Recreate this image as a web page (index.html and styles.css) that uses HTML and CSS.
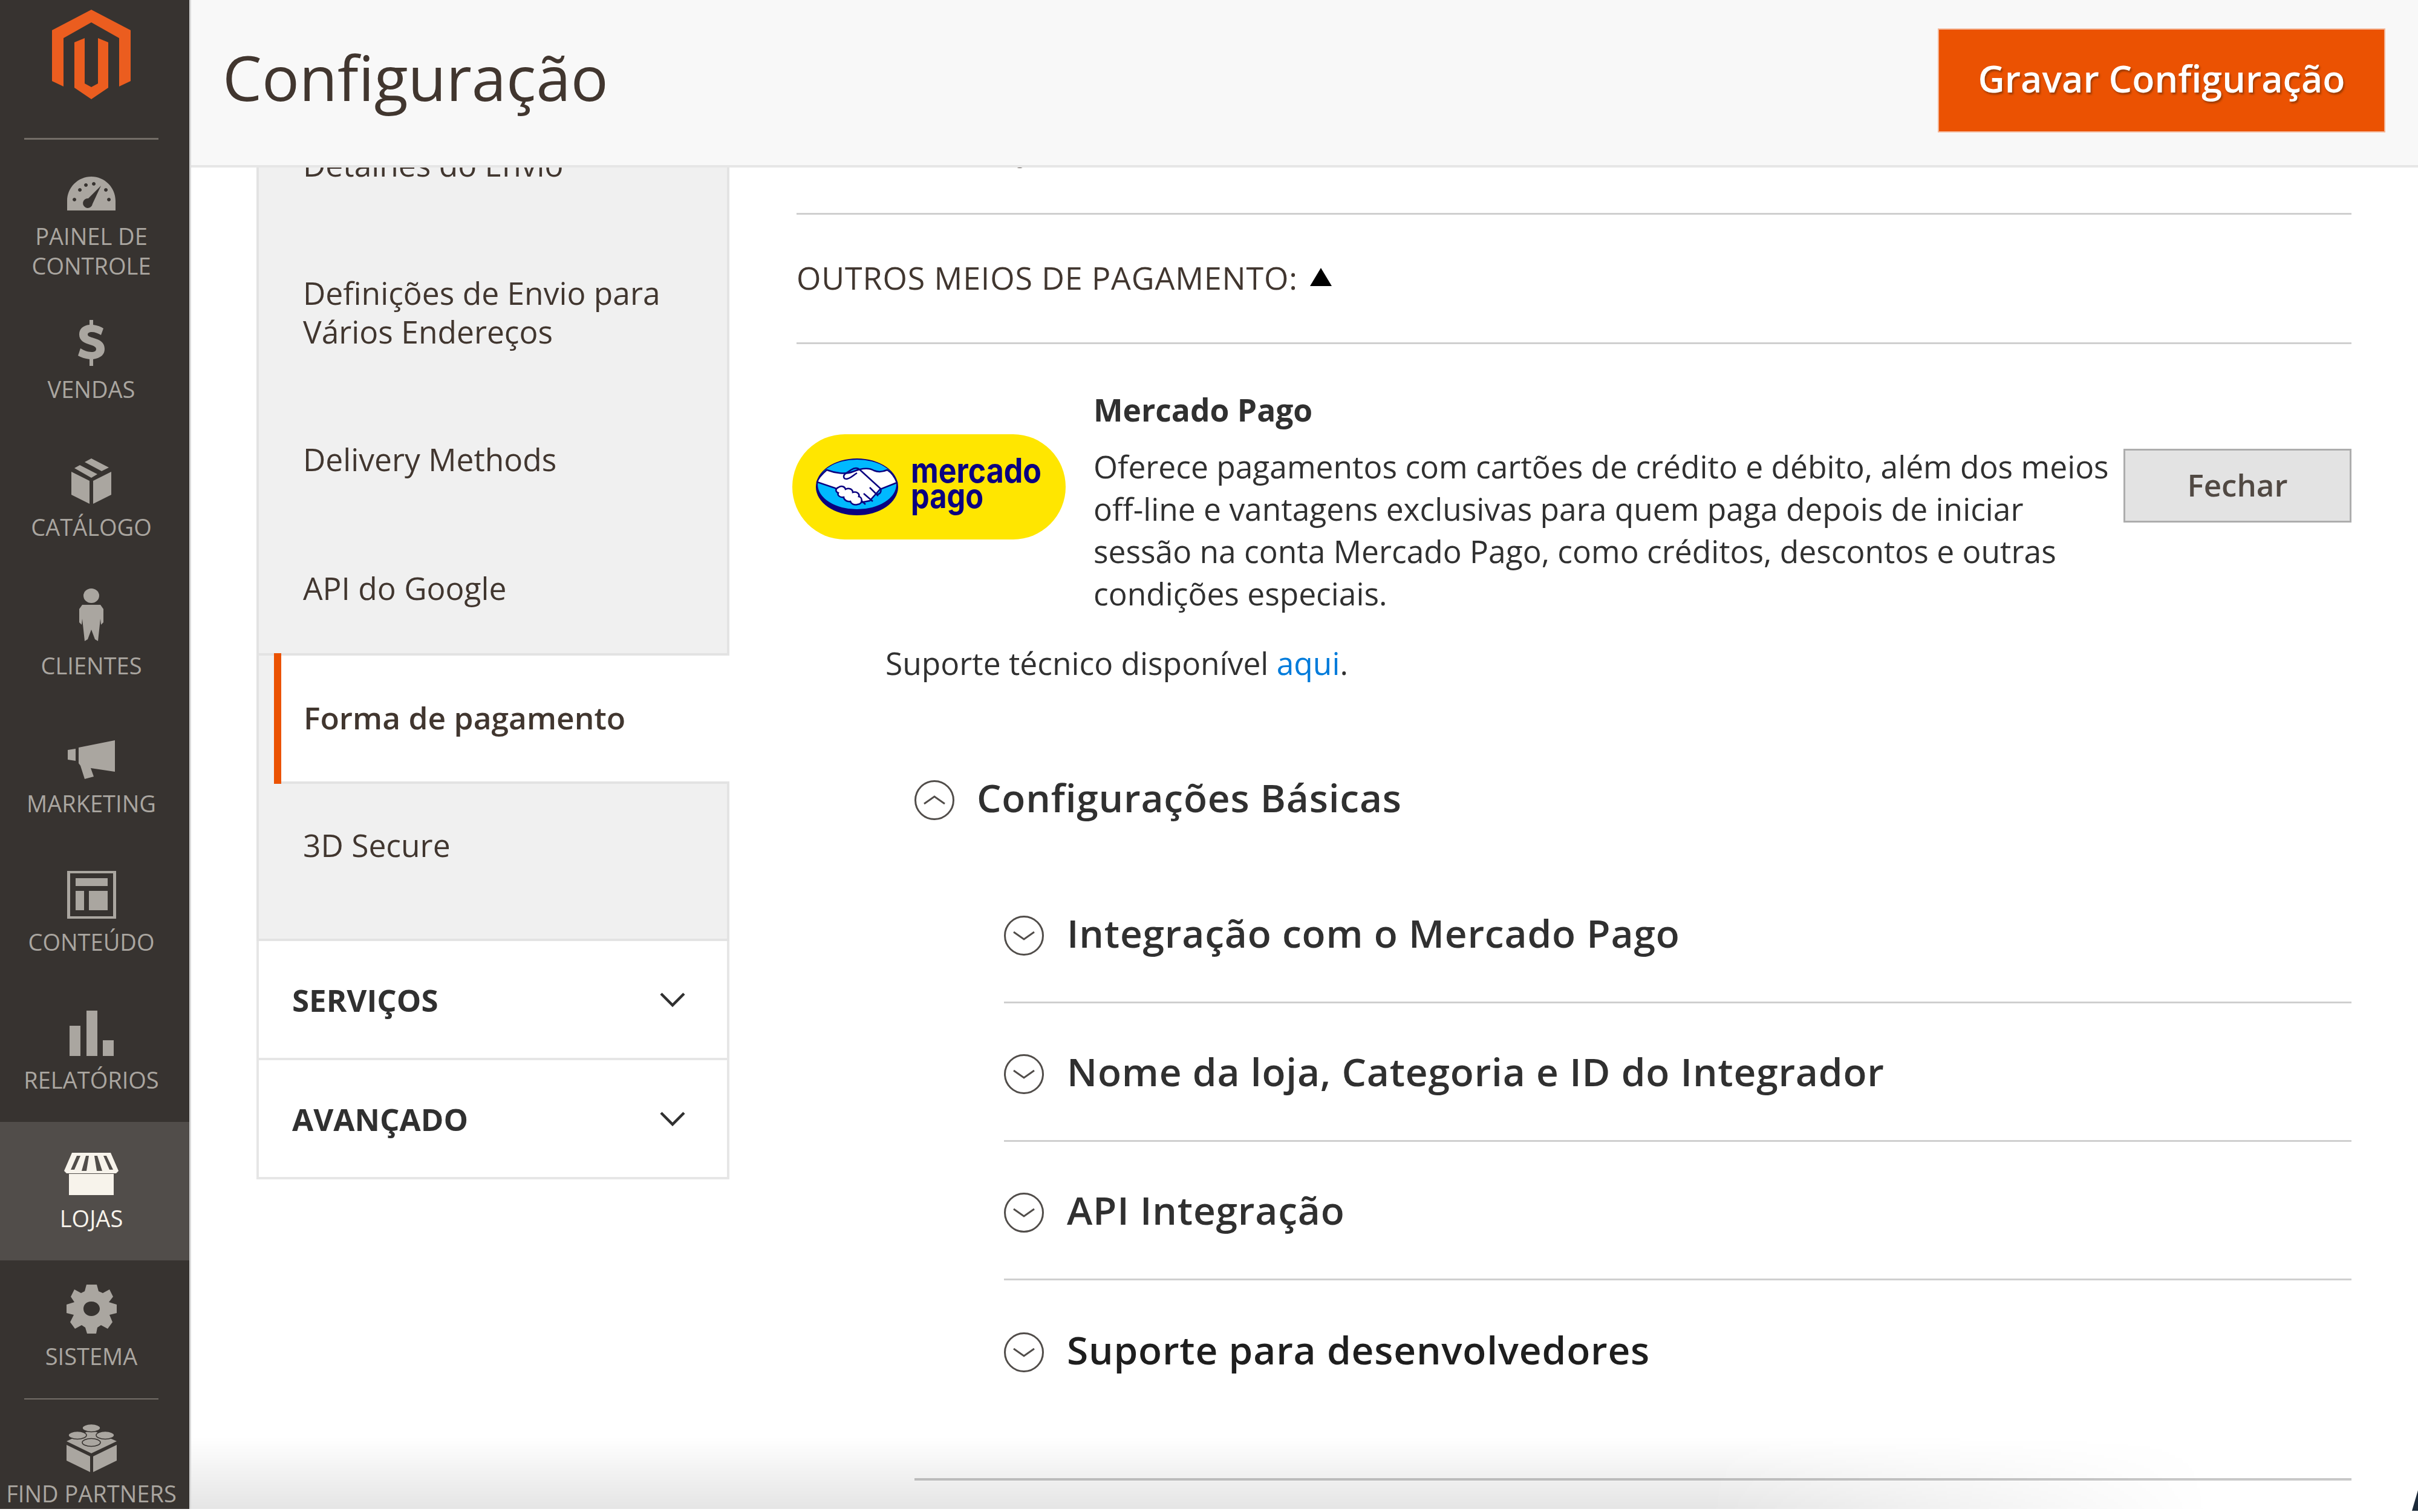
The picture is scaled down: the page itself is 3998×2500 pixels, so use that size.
FILE: index.html
```html
<!DOCTYPE html>
<html lang="pt">
<head>
<meta charset="utf-8">
<title>Configuração</title>
<link rel="stylesheet" href="styles.css">
</head>
<body>
<div class="page">
  <aside class="sidebar">
    <div class="brand">
      <svg class="logo" viewBox="0 0 130 148"><path fill="#eb5d1f" d="M65 0 130 34V118L111 127V47L65 21 19 47V127L0 118V34Z"/><path fill="#eb5d1f" d="M37 54 54 47V122L65 128 76 122V47L93 54V129L65 148 37 129Z"/></svg>
    </div>
    <nav class="menu">
      <a class="item item-first">
        <svg class="ic ic-dash" viewBox="0 0 80 56"><path fill="#aaa6a0" fill-rule="evenodd" d="M0 56V40C0 18 18 0 40 0S80 18 80 40V56ZM12 35a3 3 0 1 0 .1 0ZM21 19a3 3 0 1 0 .1 0ZM31 11a3 3 0 1 0 .1 0ZM44 9a3 3 0 1 0 .1 0ZM64 19a3 3 0 1 0 .1 0ZM69 35a3 3 0 1 0 .1 0ZM56 15 35 36a8 8 0 1 0 7 9Z"/></svg>
        <span>Painel de Controle</span>
      </a>
      <a class="item">
        <svg class="ic ic-dollar" viewBox="0 0 44 76"><path fill="#aaa6a0" d="M19 0h6v8c7 1 13 3 17 6l-4 11c-5-3-10-5-15-5-5 0-7 2-7 4 0 3 4 4 10 6 10 3 18 7 18 18 0 9-6 15-19 17v11h-6V65C11 64 5 62 0 59l4-12c5 3 12 6 18 6s8-2 8-5c0-3-3-5-10-7C10 38 2 34 2 24 2 15 8 9 19 8Z"/></svg>
        <span>Vendas</span>
      </a>
      <a class="item">
        <svg class="ic ic-box" viewBox="0 0 66 75"><path fill="#aaa6a0" d="M0 22 30 37V75L0 60ZM36 37 66 22V60L36 75ZM5 16 14 11 43 26 33 32ZM22 6 33 0 62 15 50 21Z"/></svg>
        <span>Catálogo</span>
      </a>
      <a class="item">
        <svg class="ic ic-person" viewBox="0 0 40 87"><ellipse fill="#aaa6a0" cx="20" cy="12" rx="13" ry="12"/><path fill="#aaa6a0" d="M5 27H35L40 34V56L36 60 35 50 31 87 26 84 20 68 14 84 9 87 5 50 4 60 0 56V34Z"/></svg>
        <span>Clientes</span>
      </a>
      <a class="item">
        <svg class="ic ic-mega" viewBox="0 0 78 64"><path fill="#aaa6a0" d="M0 16 13 14V34L0 32ZM18 12 78 0V52L38 46 43 60 28 64 21 42 18 38Z"/></svg>
        <span>Marketing</span>
      </a>
      <a class="item">
        <svg class="ic ic-content" viewBox="0 0 81 79"><path fill="#aaa6a0" fill-rule="evenodd" d="M0 0H81V79H0ZM5 4V75H76V4Z"/><path fill="#aaa6a0" d="M14 12H67V25H14ZM14 33H28V65H14ZM36 33H67V65H36Z"/></svg>
        <span>Conteúdo</span>
      </a>
      <a class="item">
        <svg class="ic ic-report" viewBox="0 0 73 75"><path fill="#aaa6a0" d="M0 25H18V75H0ZM28 0H46V75H28ZM55 49H73V75H55Z"/></svg>
        <span>Relatórios</span>
      </a>
      <a class="item item-active">
        <svg class="ic ic-store" viewBox="0 0 90 70"><path fill="#f7f3eb" d="M13 0H77L90 30 86 34H4L0 30ZM8 35H82V70H8Z"/><path fill="#514d4a" d="M21 5H27L17 28H11ZM36 5H41L37 30H29ZM50 5H55L63 30H54ZM65 5H70L81 28H75Z"/></svg>
        <span>Lojas</span>
      </a>
      <a class="item">
        <svg class="ic ic-gear" viewBox="0 0 83 81"><path fill="#aaa6a0" fill-rule="evenodd" d="M33 0H50L53 11 60 14 71 8 77 20 70 29 83 33V47L71 50 76 62 68 73 57 67 51 71 49 81H34L31 71 25 67 14 73 6 62 12 50 0 47V33L13 29 7 20 13 8 24 14 30 11ZM41 28C31 28 28 35 28 40 28 46 33 52 41 52S55 46 55 40C55 35 51 28 41 28Z"/></svg>
        <span>Sistema</span>
      </a>
      <a class="item item-partners">
        <svg class="ic ic-lego" viewBox="0 0 83 81"><path fill="#aaa6a0" d="M0 36 39 55V81L0 62ZM44 55 83 36V62L44 81ZM0 30 41 11 83 30 41 50Z"/><g fill="#aaa6a0" stroke="#373330" stroke-width="1.6"><ellipse cx="41" cy="8" rx="15" ry="6.5"/><ellipse cx="18" cy="20" rx="15" ry="6.5"/><ellipse cx="64" cy="20" rx="15" ry="6.5"/><ellipse cx="41" cy="32" rx="15" ry="6.5"/></g></svg>
        <span>Find Partners</span>
      </a>
    </nav>
  </aside>
  <main class="main">
    <header class="topbar">
      <h1 class="title">Configuração</h1>
      <button class="save">Gravar Configuração</button>
    </header>
    <div class="body">
      <section class="tabs">
        <div class="tab-list">
          <a class="tab tab-clip">Detalhes do Envio</a>
          <a class="tab tab-two">Definições de Envio para Vários Endereços</a>
          <a class="tab">Delivery Methods</a>
          <a class="tab tab-last">API do Google</a>
          <a class="tab tab-on">Forma de pagamento</a>
          <a class="tab tab-end">3D Secure</a>
        </div>
        <div class="group">Serviços <svg class="caret" viewBox="0 0 44 26"><path d="M3 3 22 22 41 3" fill="none" stroke="#303030" stroke-width="4.5"/></svg></div>
        <div class="group">Avançado <svg class="caret" viewBox="0 0 44 26"><path d="M3 3 22 22 41 3" fill="none" stroke="#303030" stroke-width="4.5"/></svg></div>
      </section>
      <section class="content">
        <div class="clip-line"><span class="clip-text">y</span></div>
        <div class="others">Outros meios de pagamento: <i class="tri"></i></div>
        <div class="intro">
          <svg class="mp" viewBox="0 0 452 174">
            <rect width="452" height="174" rx="87" fill="#ffe600"/>
            <ellipse cx="107" cy="87" rx="68" ry="47" fill="#0a0080"/>
            <ellipse cx="107" cy="83" rx="65" ry="41" fill="#00b9ff"/>
            <path d="M57 59C70 64 88 67 100 62 112 57 125 54 135 60 142 63 150 62 157 59 165 64 170 72 173 80L145 91 128 110 112 113 90 110 71 89 41 79C43 72 50 65 57 59Z" fill="#fff" stroke="#0a0080" stroke-width="2.5"/>
            <path d="M88 74C84 72 84 68 88 65L97 59C103 55 108 55 112 59L146 90C148 96 144 100 139 99M128 88 142 102M118 98 133 111M108 104 121 116" fill="none" stroke="#0a0080" stroke-width="2.5"/>
            <path d="M88 74C96 74 100 68 107 64" fill="none" stroke="#0a0080" stroke-width="2.5"/>
            <path d="M76 88c6-4 11-1 12 3 6-3 12 0 12 5 7-2 12 3 10 7 6 1 7 12-2 13-7 2-11-2-12-5-6 1-11-3-11-7-6 1-11-3-9-7-5-2-5-7 0-9Z" fill="#fff" stroke="#0a0080" stroke-width="2.5"/>
            <text class="mp-word" x="196" y="80" textLength="216" lengthAdjust="spacingAndGlyphs">mercado</text>
            <text class="mp-word" x="196" y="122" textLength="120" lengthAdjust="spacingAndGlyphs">pago</text>
          </svg>
          <div class="intro-text">
            <h2 class="intro-title">Mercado Pago</h2>
            <p class="intro-desc">Oferece pagamentos com cartões de crédito e débito, além dos meios off-line e vantagens exclusivas para quem paga depois de iniciar sessão na conta Mercado Pago, como créditos, descontos e outras condições especiais.</p>
          </div>
          <button class="close">Fechar</button>
        </div>
        <p class="support">Suporte técnico disponível <a class="link">aqui</a>.</p>
        <div class="sec sec-main">
          <svg class="chev" viewBox="0 0 66 66"><circle cx="33" cy="33" r="31.5" fill="none" stroke="#514d4a" stroke-width="3"/><path d="M16 39 33 27 50 39" fill="none" stroke="#514d4a" stroke-width="3"/></svg>
          <h3 class="sec-title">Configurações Básicas</h3>
        </div>
        <div class="subs">
          <div class="sec sec-sub sec-line">
            <svg class="chev" viewBox="0 0 66 66"><circle cx="33" cy="33" r="31.5" fill="none" stroke="#514d4a" stroke-width="3"/><path d="M16 27 33 39 50 27" fill="none" stroke="#514d4a" stroke-width="3"/></svg>
            <h3 class="sec-title">Integração com o Mercado Pago</h3>
          </div>
          <div class="sec sec-sub sec-line">
            <svg class="chev" viewBox="0 0 66 66"><circle cx="33" cy="33" r="31.5" fill="none" stroke="#514d4a" stroke-width="3"/><path d="M16 27 33 39 50 27" fill="none" stroke="#514d4a" stroke-width="3"/></svg>
            <h3 class="sec-title">Nome da loja, Categoria e ID do Integrador</h3>
          </div>
          <div class="sec sec-sub sec-line">
            <svg class="chev" viewBox="0 0 66 66"><circle cx="33" cy="33" r="31.5" fill="none" stroke="#514d4a" stroke-width="3"/><path d="M16 27 33 39 50 27" fill="none" stroke="#514d4a" stroke-width="3"/></svg>
            <h3 class="sec-title">API Integração</h3>
          </div>
          <div class="sec sec-sub">
            <svg class="chev" viewBox="0 0 66 66"><circle cx="33" cy="33" r="31.5" fill="none" stroke="#514d4a" stroke-width="3"/><path d="M16 27 33 39 50 27" fill="none" stroke="#514d4a" stroke-width="3"/></svg>
            <h3 class="sec-title sec-dark">Suporte para desenvolvedores</h3>
          </div>
        </div>
        <div class="bottom-rule"></div>
      </section>
    </div>
    <div class="dock-shadow"></div>
    <div class="corner"></div>
  </main>
</div>
</body>
</html>
```

FILE: styles.css
```css
* { box-sizing: border-box; }
html, body { margin: 0; height: 100%; }
body { font-family: "Open Sans", sans-serif; color: #303030; background: #fff; overflow: hidden; }
.page { display: flex; align-items: flex-start; width: 3998px; height: 2500px; overflow: hidden; }

.sidebar { width: 313px; height: 2495px; flex: none; background: #373330; display: flex; flex-direction: column; box-shadow: 3px 0 0 #d8d8d8; position: relative; z-index: 3; overflow: hidden; }
.brand { height: 231px; margin-left: 40px; width: 222px; border-bottom: 3px solid #736d67; padding: 16px 0 0 46px; flex: none; }
.logo { display: block; width: 130px; height: 148px; }
.menu { display: flex; flex-direction: column; flex: 1; }
.item { display: flex; flex-direction: column; align-items: center; justify-content: flex-end; height: 228.5px; padding: 0 11px 45px 0; flex: none; color: #aaa6a0; font-size: 38px; line-height: 49px; text-transform: uppercase; text-align: center; }
.item span { display: block; width: 240px; }
.item-first { height: 253px; padding-bottom: 20px; }
.item-active { background: #514d4a; color: #f7f3eb; }
.item-partners { height: 184px; padding-bottom: 0; justify-content: flex-start; padding-top: 41px; position: relative; }
.item-partners::before { content: ""; position: absolute; top: 0; left: 40px; width: 222px; height: 2px; background: #736d67; }
.item-partners span { width: 300px; white-space: nowrap; margin-top: 11px; }
.ic { display: block; flex: none; }
.ic-dash { width: 80px; height: 56px; margin-bottom: 18px; }
.ic-dollar { width: 44px; height: 76px; margin-bottom: 14px; }
.ic-box { width: 66px; height: 75px; margin-bottom: 14px; }
.ic-person { width: 40px; height: 87px; margin-bottom: 16px; }
.ic-mega { width: 78px; height: 64px; margin-bottom: 16px; }
.ic-content { width: 81px; height: 79px; margin-bottom: 14px; }
.ic-report { width: 73px; height: 75px; margin-bottom: 15px; }
.ic-store { width: 90px; height: 70px; margin-bottom: 14px; }
.ic-gear { width: 83px; height: 81px; margin-bottom: 13px; }
.ic-lego { width: 83px; height: 81px; margin-bottom: 0; }

.main { flex: 1; min-width: 0; height: 2500px; display: flex; flex-direction: column; position: relative; }
.topbar { height: 277px; flex: none; background: #f8f8f8; border-bottom: 4px solid #e6e6e6; display: flex; align-items: flex-start; justify-content: space-between; padding: 48px 55px 0 55px; position: relative; z-index: 2; }
.title { margin: 8px 0 0; font-size: 103px; line-height: 142px; font-weight: 400; color: #41362f; }
.save { width: 738px; height: 170px; border: 0; background: #eb5202; outline: 2px solid #f4b698; outline-offset: -1px; color: #fff; font: 600 61px "Open Sans", sans-serif; text-shadow: 2px 3px 3px rgba(90,40,0,.55); padding: 0 0 8px; }

.body { flex: 1; min-height: 0; display: flex; overflow: hidden; padding-left: 111px; }
.tabs { width: 782px; flex: none; margin-top: -3px; }
.tab-list { background: #f0f0f0; border: solid #e3e3e3; border-width: 0 4px 4px; height: 1282px; display: flex; flex-direction: column; }
.tab { display: block; height: 213px; padding: 0 60px 0 73px; font-size: 51.5px; line-height: 64px; color: #41362f; flex: none; }
.tab-clip { margin-top: -34px; height: 212px; }
.tab-two { height: 275px; }
.tab-last { height: 144px; border-bottom: 4px solid #e3e3e3; }
.tab-on { height: 216px; margin: -4px -4px 0 25px; background: #fff; border-left: 12px solid #eb5202; box-shadow: inset 0 4px 0 #e3e3e3, inset 0 -4px 0 #e3e3e3; padding: 0 0 4px 37px; display: flex; align-items: center; font-weight: 600; }
.tab-end { height: auto; padding-top: 69px; }
.group { height: 197px; border: 4px solid #e6e6e6; border-top: 0; display: flex; align-items: center; justify-content: space-between; padding: 0 68px 0 55px; font-weight: 700; font-size: 51px; text-transform: uppercase; color: #303030; }
.caret { width: 44px; height: 26px; }

.content { width: 2571px; flex: none; margin-left: 111px; position: relative; }
.clip-line { height: 78px; border-bottom: 3px solid #cfcfcf; overflow: hidden; }
.clip-text { display: block; font-size: 51.5px; line-height: 64px; margin: -63px 0 0 365px; color: #514943; }
.others { height: 214px; border-bottom: 3px solid #cfcfcf; display: flex; align-items: center; padding-bottom: 5px; font-size: 52px; letter-spacing: .85px; text-transform: uppercase; color: #41362f; }
.tri { display: inline-block; width: 0; height: 0; border: solid transparent; border-width: 0 18px 30px; border-bottom-color: #000; margin-left: 20px; }
.intro { display: flex; align-items: flex-start; padding-top: 71px; }
.mp { width: 452px; height: 174px; flex: none; margin: 78px 46px 0 -7px; }
.mp-word { font: 700 56px "Inter", sans-serif; fill: #0a0080; }
.intro-text { width: 1690px; flex: none; }
.intro-title { margin: 2px 0 24px; font-size: 51.5px; line-height: 70px; font-weight: 700; color: #303030; }
.intro-desc { margin: 0; font-size: 51.5px; line-height: 70px; color: #303030; }
.close { width: 377px; height: 122px; margin: 102px 0 0 auto; border: 3px solid #adadad; background: #e3e3e3; color: #514943; font: 600 51px "Open Sans", sans-serif; padding: 0 0 5px; }
.support { margin: 45px 0 0 147px; font-size: 51.5px; line-height: 70px; color: #303030; }
.link { color: #007bdb; }
.sec { display: flex; align-items: center; }
.sec-main { margin: 143px 0 0 195px; height: 90px; }
.sec-title { margin: 0; font-size: 64px; line-height: 90px; font-weight: 600; letter-spacing: .8px; color: #303030; }
.sec-main .sec-title { margin-left: 37px; }
.chev { width: 66px; height: 66px; flex: none; margin-top: 8px; }
.subs { margin-left: 343px; padding-top: 66px; }
.sec-sub { height: 229px; }
.sec-sub .sec-title { margin-left: 38px; }
.sec-line { border-bottom: 3px solid #cfcfcf; }
.sec-dark { color: #1e1e1e; }
.bottom-rule { height: 4px; background: #c8c8c8; margin: 98px 0 0 195px; }
.dock-shadow { position: absolute; left: 0; right: 340px; bottom: 5px; height: 120px; background: linear-gradient(to bottom, rgba(0,0,0,0), rgba(0,0,0,.1)); -webkit-mask-image: linear-gradient(to right, #000 75%, transparent); mask-image: linear-gradient(to right, #000 75%, transparent); pointer-events: none; }
.corner { position: absolute; right: 0; bottom: 2px; width: 10px; height: 34px; background: #1c2a3a; clip-path: polygon(100% 0, 100% 100%, 0 100%); }
```
